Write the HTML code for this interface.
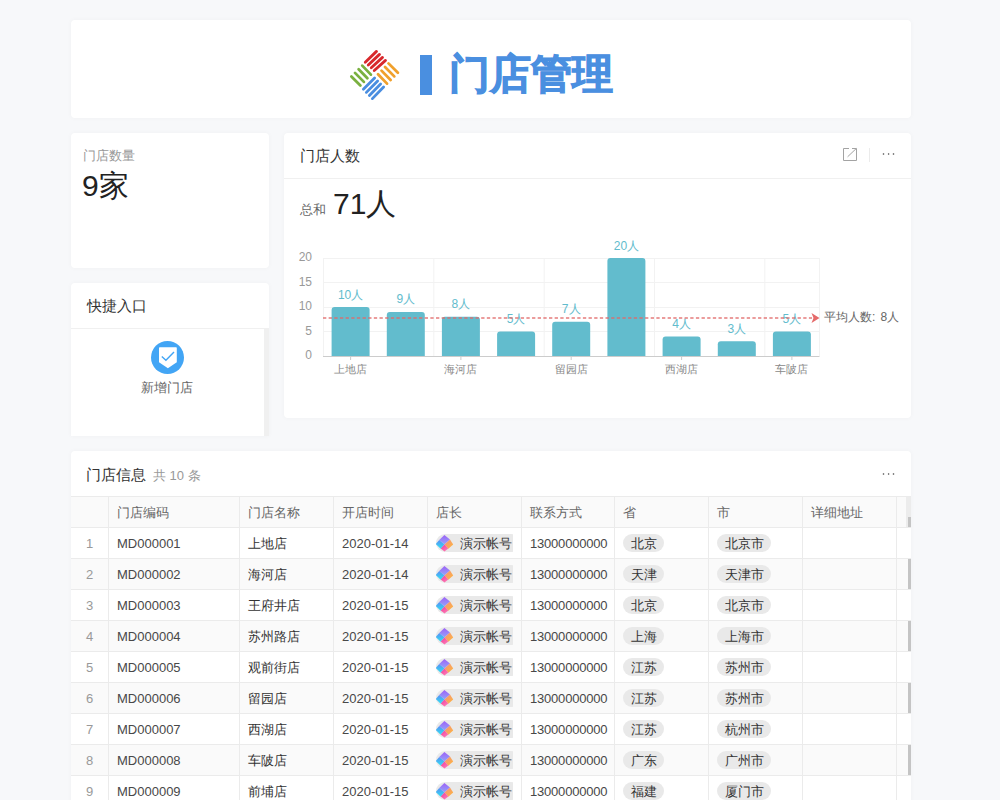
<!DOCTYPE html>
<html><head><meta charset="utf-8"><style>
*{box-sizing:border-box;margin:0;padding:0}
html,body{width:1000px;height:800px;overflow:hidden;background:#f7f8fa;font-family:"Liberation Sans",sans-serif;color:#333}
.card{position:absolute;background:#fff;border-radius:4px;box-shadow:0 0 5px rgba(0,0,0,0.035)}
.abs{position:absolute;white-space:nowrap}
.logo{position:absolute;left:345px;top:45px}
.bar{position:absolute;left:420px;top:55px;width:12px;height:40px;background:#4a8fe0}
.title{position:absolute;left:449px;top:47px;font-size:41px;font-weight:bold;-webkit-text-stroke:1.1px #4a8fe0;color:#4a8fe0;line-height:54px}
.chart{position:absolute;left:0;top:0}
.chart text{font-family:"Liberation Sans",sans-serif}
.bl{font-size:12px;fill:#62bccd}
.xl{font-size:11px;fill:#888}
.yl{font-size:12px;fill:#999}
.al{font-size:12px;fill:#666}
.tbl{position:absolute;left:71px;top:496px;width:840px;height:320px;overflow:hidden}
.tr{position:absolute;left:0;width:840px;height:31px;border-bottom:1px solid #ebebeb;background:#fff}
.tr.th{background:#fafafa;border-top:1px solid #ebebeb;height:32px}
.tr.odd{background:#fafafa}
.c{position:absolute;top:0;height:30px;line-height:30px;padding-top:1px;padding-left:8px;font-size:13px;color:#333;border-right:1px solid #ebebeb;overflow:hidden;white-space:nowrap}
.c.last{border-right:none}
.th .c{color:#666;height:30px;line-height:30px;padding-top:1px}
.c.num{text-align:center;padding-left:0;color:#999}
.c.lat{color:#484848}
.c.ph{letter-spacing:-0.2px}
.clip{width:77px;overflow:hidden;height:30px}
.chip{display:inline-block;height:18px;line-height:20px;border-radius:9px;background:#e9e9e9;padding:0 7.5px;vertical-align:middle;margin-top:-3px}
.chip.av{padding:0 8px 0 0}
.chip.av svg{vertical-align:top;margin-left:-1px;margin-right:6px}
.sb{position:absolute;left:837px;top:0;width:3px;height:30px;background:#c4c4c4}
.sbh{left:835px;width:5px;height:30px;background:#ececec}
.sbh2{left:837px;top:20px;width:3px;height:10px;background:#c4c4c4}
</style></head><body>
<div class="card" style="left:71px;top:20px;width:840px;height:98px"></div>
<svg class="logo" width="60" height="60" viewBox="0 0 60 60" stroke-width="2.8" stroke-linecap="round"><line x1="20.26" y1="17.25" x2="31.51" y2="6.38" stroke="#d8282c"/><line x1="23.26" y1="20.01" x2="34.51" y2="9.38" stroke="#d8282c"/><line x1="26.26" y1="22.76" x2="37.51" y2="12.38" stroke="#d8282c"/><line x1="29.26" y1="25.51" x2="40.51" y2="15.38" stroke="#d8282c"/><line x1="43.51" y1="18.38" x2="52.89" y2="27.76" stroke="#f0a02c"/><line x1="40.01" y1="22.01" x2="49.26" y2="31.38" stroke="#f0a02c"/><line x1="36.51" y1="25.63" x2="45.64" y2="35.01" stroke="#f0a02c"/><line x1="33.01" y1="29.26" x2="42.01" y2="38.63" stroke="#f0a02c"/><line x1="18.38" y1="44.26" x2="29.63" y2="33.01" stroke="#4a8ee0"/><line x1="21.38" y1="47.39" x2="32.63" y2="36.01" stroke="#4a8ee0"/><line x1="24.38" y1="50.51" x2="35.63" y2="39.01" stroke="#4a8ee0"/><line x1="27.38" y1="53.64" x2="38.63" y2="42.01" stroke="#4a8ee0"/><line x1="6.38" y1="31.51" x2="15.38" y2="40.51" stroke="#7ab040"/><line x1="10.00" y1="27.88" x2="18.88" y2="36.88" stroke="#7ab040"/><line x1="13.63" y1="24.26" x2="22.38" y2="33.26" stroke="#7ab040"/><line x1="17.25" y1="20.63" x2="25.88" y2="29.63" stroke="#7ab040"/></svg>
<div class="bar"></div>
<div class="title abs">门店管理</div>

<div class="card" style="left:71px;top:133px;width:198px;height:135px"></div>
<div class="abs" style="left:83px;top:147px;font-size:13px;color:#999">门店数量</div>
<div class="abs" style="left:82px;top:166px;font-size:30px;color:#222">9家</div>

<div class="card" style="left:71px;top:283px;width:198px;height:153px;border-radius:4px 4px 0 0"></div>
<div class="abs" style="left:71px;top:328px;width:198px;height:1px;background:#f0f0f0"></div>
<div class="abs" style="left:264px;top:329px;width:5px;height:107px;background:#f0f0f0"></div>
<div class="abs" style="left:87px;top:297px;font-size:15px;color:#333">快捷入口</div>
<svg class="abs" style="left:151px;top:341px" width="33" height="33" viewBox="0 0 33 33"><circle cx="16.5" cy="16.5" r="16.5" fill="#42a5f5"/><path d="M8 7 Q8 6.2 8.8 6.2 H25 Q25.8 6.2 25.8 7 V21.2 L16.9 27.3 L8 21.2Z" fill="#fff"/><path d="M10.8 15.5 L14.9 19.2 L23 11" fill="none" stroke="#42a5f5" stroke-width="1.4"/></svg>
<div class="abs" style="left:141px;top:379px;font-size:13px;color:#666">新增门店</div>

<div class="card" style="left:284px;top:133px;width:627px;height:285px"></div>
<div class="abs" style="left:284px;top:178px;width:627px;height:1px;background:#f0f0f0"></div>
<div class="abs" style="left:300px;top:147px;font-size:15px;color:#333">门店人数</div>
<svg class="abs" style="left:842px;top:147px" width="16" height="16" viewBox="0 0 16 16"><path d="M7 1.5 H1.5 V13.5 H14.5 V1.5 H10" fill="none" stroke="#a3a3a3" stroke-width="1"/><path d="M5.6 9.8 L14.2 1.6" stroke="#a3a3a3" stroke-width="1"/></svg>
<div class="abs" style="left:869px;top:148px;width:1px;height:14px;background:#ebebeb"></div>
<svg class="abs" style="left:882px;top:152px" width="14" height="4" viewBox="0 0 14 4"><circle cx="1.5" cy="2" r="0.8" fill="#444"/><circle cx="6.6" cy="2" r="0.8" fill="#444"/><circle cx="11.5" cy="2" r="0.8" fill="#444"/></svg>
<div class="abs" style="left:300px;top:201px;font-size:13px;color:#666">总和</div>
<div class="abs" style="left:333px;top:184px;font-size:30px;color:#222">71人</div>
<svg class="chart" width="1000" height="800"><line x1="323" y1="331.5" x2="819.5" y2="331.5" stroke="#f2f2f2" stroke-width="1"/><line x1="323" y1="307.5" x2="819.5" y2="307.5" stroke="#f2f2f2" stroke-width="1"/><line x1="323" y1="282.5" x2="819.5" y2="282.5" stroke="#f2f2f2" stroke-width="1"/><line x1="323" y1="258.5" x2="819.5" y2="258.5" stroke="#f2f2f2" stroke-width="1"/><line x1="323.5" y1="258" x2="323.5" y2="356" stroke="#f2f2f2" stroke-width="1"/><line x1="433.8" y1="258" x2="433.8" y2="356" stroke="#f2f2f2" stroke-width="1"/><line x1="544.2" y1="258" x2="544.2" y2="356" stroke="#f2f2f2" stroke-width="1"/><line x1="654.5" y1="258" x2="654.5" y2="356" stroke="#f2f2f2" stroke-width="1"/><line x1="764.8" y1="258" x2="764.8" y2="356" stroke="#f2f2f2" stroke-width="1"/><line x1="819.5" y1="258" x2="819.5" y2="356" stroke="#f2f2f2" stroke-width="1"/><path d="M331.6 356 V310.0 Q331.6 307.0 334.6 307.0 H366.6 Q369.6 307.0 369.6 310.0 V356Z" fill="#62bccd"/><text x="350.6" y="298.5" text-anchor="middle" class="bl">10人</text><path d="M386.8 356 V314.9 Q386.8 311.9 389.8 311.9 H421.8 Q424.8 311.9 424.8 314.9 V356Z" fill="#62bccd"/><text x="405.8" y="303.4" text-anchor="middle" class="bl">9人</text><path d="M441.9 356 V319.8 Q441.9 316.8 444.9 316.8 H476.9 Q479.9 316.8 479.9 319.8 V356Z" fill="#62bccd"/><text x="460.9" y="308.3" text-anchor="middle" class="bl">8人</text><path d="M497.1 356 V334.5 Q497.1 331.5 500.1 331.5 H532.1 Q535.1 331.5 535.1 334.5 V356Z" fill="#62bccd"/><text x="516.1" y="323.0" text-anchor="middle" class="bl">5人</text><path d="M552.2 356 V324.7 Q552.2 321.7 555.2 321.7 H587.2 Q590.2 321.7 590.2 324.7 V356Z" fill="#62bccd"/><text x="571.2" y="313.2" text-anchor="middle" class="bl">7人</text><path d="M607.4 356 V261.0 Q607.4 258.0 610.4 258.0 H642.4 Q645.4 258.0 645.4 261.0 V356Z" fill="#62bccd"/><text x="626.4" y="249.5" text-anchor="middle" class="bl">20人</text><path d="M662.6 356 V339.4 Q662.6 336.4 665.6 336.4 H697.6 Q700.6 336.4 700.6 339.4 V356Z" fill="#62bccd"/><text x="681.6" y="327.9" text-anchor="middle" class="bl">4人</text><path d="M717.8 356 V344.3 Q717.8 341.3 720.8 341.3 H752.8 Q755.8 341.3 755.8 344.3 V356Z" fill="#62bccd"/><text x="736.8" y="332.8" text-anchor="middle" class="bl">3人</text><path d="M772.9 356 V334.5 Q772.9 331.5 775.9 331.5 H807.9 Q810.9 331.5 810.9 334.5 V356Z" fill="#62bccd"/><text x="791.9" y="323.0" text-anchor="middle" class="bl">5人</text><line x1="323" y1="356.5" x2="819.5" y2="356.5" stroke="#cccccc" stroke-width="1"/><line x1="350.6" y1="356" x2="350.6" y2="360" stroke="#cccccc" stroke-width="1"/><line x1="460.9" y1="356" x2="460.9" y2="360" stroke="#cccccc" stroke-width="1"/><line x1="571.2" y1="356" x2="571.2" y2="360" stroke="#cccccc" stroke-width="1"/><line x1="681.6" y1="356" x2="681.6" y2="360" stroke="#cccccc" stroke-width="1"/><line x1="791.9" y1="356" x2="791.9" y2="360" stroke="#cccccc" stroke-width="1"/><text x="350.6" y="373" text-anchor="middle" class="xl">上地店</text><text x="460.9" y="373" text-anchor="middle" class="xl">海河店</text><text x="571.2" y="373" text-anchor="middle" class="xl">留园店</text><text x="681.6" y="373" text-anchor="middle" class="xl">西湖店</text><text x="791.9" y="373" text-anchor="middle" class="xl">车陂店</text><text x="312" y="359.0" text-anchor="end" class="yl">0</text><text x="312" y="334.5" text-anchor="end" class="yl">5</text><text x="312" y="310.0" text-anchor="end" class="yl">10</text><text x="312" y="285.5" text-anchor="end" class="yl">15</text><text x="312" y="261.0" text-anchor="end" class="yl">20</text><line x1="323" y1="318" x2="812" y2="318" stroke="#e06868" stroke-opacity="0.66" stroke-width="1.8" stroke-dasharray="3.3 2.35"/><path d="M811.5 313.0 L819.5 318.0 L811.5 323.0 L813.5 318.0Z" fill="#e56a6a"/><text x="824" y="321.0" class="al">平均人数:<tspan x="880.5">8人</tspan></text></svg>

<div class="card" style="left:71px;top:451px;width:840px;height:400px"></div>
<div class="abs" style="left:86px;top:466px;font-size:15px;color:#333">门店信息</div>
<div class="abs" style="left:153px;top:467px;font-size:13px;color:#999">共 10 条</div>
<svg class="abs" style="left:882px;top:472px" width="14" height="4" viewBox="0 0 14 4"><circle cx="1.5" cy="2" r="0.8" fill="#444"/><circle cx="6.6" cy="2" r="0.8" fill="#444"/><circle cx="11.5" cy="2" r="0.8" fill="#444"/></svg>
<div class="tbl">
<div class="tr th" style="top:0px"><div class="c " style="left:0px;width:38px"></div><div class="c " style="left:38px;width:131px">门店编码</div><div class="c " style="left:169px;width:94px">门店名称</div><div class="c " style="left:263px;width:94px">开店时间</div><div class="c " style="left:357px;width:94px">店长</div><div class="c " style="left:451px;width:93px">联系方式</div><div class="c " style="left:544px;width:94px">省</div><div class="c " style="left:638px;width:94px">市</div><div class="c " style="left:732px;width:94px">详细地址</div><div class="c  last" style="left:826px;width:15px"></div><div class="sb sbh"></div><div class="sb sbh2"></div></div>
<div class="tr" style="top:32px"><div class="c num" style="left:0px;width:38px">1</div><div class="c lat" style="left:38px;width:131px">MD000001</div><div class="c " style="left:169px;width:94px">上地店</div><div class="c lat" style="left:263px;width:94px">2020-01-14</div><div class="c avc" style="left:357px;width:94px"><div class="clip"><span class="chip av"><svg width="19" height="18" viewBox="0 0 19 18"><defs><linearGradient id="gp" x1="0" y1="0" x2="0" y2="1"><stop offset="0" stop-color="#9d62f6"/><stop offset="1" stop-color="#94a4fa"/></linearGradient><linearGradient id="gb" x1="0" y1="0" x2="0" y2="1"><stop offset="0" stop-color="#5a8cf6"/><stop offset="1" stop-color="#2ee4f2"/></linearGradient><linearGradient id="go" x1="0" y1="0" x2="1" y2="1"><stop offset="0" stop-color="#f39080"/><stop offset="1" stop-color="#ffb83a"/></linearGradient><linearGradient id="gk" x1="0" y1="0" x2="1" y2="1"><stop offset="0" stop-color="#f03c9c"/><stop offset="1" stop-color="#ff86b8"/></linearGradient></defs><path d="M9.4 1 L15 5.6 L9.5 10.6 L4.2 6Z" fill="url(#gp)"/><path d="M4.2 6 L9.5 10.6 L5.7 14.7 L0.8 10.1Z" fill="url(#gb)"/><path d="M15 5.6 L18.2 10.4 L13.3 14.8 L9.5 10.6Z" fill="url(#go)"/><path d="M9.5 10.6 L13.3 14.6 L9.5 17.6 L5.7 14.6Z" fill="url(#gk)"/></svg>演示帐号</span></div></div><div class="c lat ph" style="left:451px;width:93px">13000000000</div><div class="c " style="left:544px;width:94px"><span class="chip">北京</span></div><div class="c " style="left:638px;width:94px"><span class="chip">北京市</span></div><div class="c " style="left:732px;width:94px"></div><div class="c  last" style="left:826px;width:15px"></div></div>
<div class="tr odd" style="top:63px"><div class="c num" style="left:0px;width:38px">2</div><div class="c lat" style="left:38px;width:131px">MD000002</div><div class="c " style="left:169px;width:94px">海河店</div><div class="c lat" style="left:263px;width:94px">2020-01-14</div><div class="c avc" style="left:357px;width:94px"><div class="clip"><span class="chip av"><svg width="19" height="18" viewBox="0 0 19 18"><defs><linearGradient id="gp" x1="0" y1="0" x2="0" y2="1"><stop offset="0" stop-color="#9d62f6"/><stop offset="1" stop-color="#94a4fa"/></linearGradient><linearGradient id="gb" x1="0" y1="0" x2="0" y2="1"><stop offset="0" stop-color="#5a8cf6"/><stop offset="1" stop-color="#2ee4f2"/></linearGradient><linearGradient id="go" x1="0" y1="0" x2="1" y2="1"><stop offset="0" stop-color="#f39080"/><stop offset="1" stop-color="#ffb83a"/></linearGradient><linearGradient id="gk" x1="0" y1="0" x2="1" y2="1"><stop offset="0" stop-color="#f03c9c"/><stop offset="1" stop-color="#ff86b8"/></linearGradient></defs><path d="M9.4 1 L15 5.6 L9.5 10.6 L4.2 6Z" fill="url(#gp)"/><path d="M4.2 6 L9.5 10.6 L5.7 14.7 L0.8 10.1Z" fill="url(#gb)"/><path d="M15 5.6 L18.2 10.4 L13.3 14.8 L9.5 10.6Z" fill="url(#go)"/><path d="M9.5 10.6 L13.3 14.6 L9.5 17.6 L5.7 14.6Z" fill="url(#gk)"/></svg>演示帐号</span></div></div><div class="c lat ph" style="left:451px;width:93px">13000000000</div><div class="c " style="left:544px;width:94px"><span class="chip">天津</span></div><div class="c " style="left:638px;width:94px"><span class="chip">天津市</span></div><div class="c " style="left:732px;width:94px"></div><div class="c  last" style="left:826px;width:15px"></div><div class="sb"></div></div>
<div class="tr" style="top:94px"><div class="c num" style="left:0px;width:38px">3</div><div class="c lat" style="left:38px;width:131px">MD000003</div><div class="c " style="left:169px;width:94px">王府井店</div><div class="c lat" style="left:263px;width:94px">2020-01-15</div><div class="c avc" style="left:357px;width:94px"><div class="clip"><span class="chip av"><svg width="19" height="18" viewBox="0 0 19 18"><defs><linearGradient id="gp" x1="0" y1="0" x2="0" y2="1"><stop offset="0" stop-color="#9d62f6"/><stop offset="1" stop-color="#94a4fa"/></linearGradient><linearGradient id="gb" x1="0" y1="0" x2="0" y2="1"><stop offset="0" stop-color="#5a8cf6"/><stop offset="1" stop-color="#2ee4f2"/></linearGradient><linearGradient id="go" x1="0" y1="0" x2="1" y2="1"><stop offset="0" stop-color="#f39080"/><stop offset="1" stop-color="#ffb83a"/></linearGradient><linearGradient id="gk" x1="0" y1="0" x2="1" y2="1"><stop offset="0" stop-color="#f03c9c"/><stop offset="1" stop-color="#ff86b8"/></linearGradient></defs><path d="M9.4 1 L15 5.6 L9.5 10.6 L4.2 6Z" fill="url(#gp)"/><path d="M4.2 6 L9.5 10.6 L5.7 14.7 L0.8 10.1Z" fill="url(#gb)"/><path d="M15 5.6 L18.2 10.4 L13.3 14.8 L9.5 10.6Z" fill="url(#go)"/><path d="M9.5 10.6 L13.3 14.6 L9.5 17.6 L5.7 14.6Z" fill="url(#gk)"/></svg>演示帐号</span></div></div><div class="c lat ph" style="left:451px;width:93px">13000000000</div><div class="c " style="left:544px;width:94px"><span class="chip">北京</span></div><div class="c " style="left:638px;width:94px"><span class="chip">北京市</span></div><div class="c " style="left:732px;width:94px"></div><div class="c  last" style="left:826px;width:15px"></div></div>
<div class="tr odd" style="top:125px"><div class="c num" style="left:0px;width:38px">4</div><div class="c lat" style="left:38px;width:131px">MD000004</div><div class="c " style="left:169px;width:94px">苏州路店</div><div class="c lat" style="left:263px;width:94px">2020-01-15</div><div class="c avc" style="left:357px;width:94px"><div class="clip"><span class="chip av"><svg width="19" height="18" viewBox="0 0 19 18"><defs><linearGradient id="gp" x1="0" y1="0" x2="0" y2="1"><stop offset="0" stop-color="#9d62f6"/><stop offset="1" stop-color="#94a4fa"/></linearGradient><linearGradient id="gb" x1="0" y1="0" x2="0" y2="1"><stop offset="0" stop-color="#5a8cf6"/><stop offset="1" stop-color="#2ee4f2"/></linearGradient><linearGradient id="go" x1="0" y1="0" x2="1" y2="1"><stop offset="0" stop-color="#f39080"/><stop offset="1" stop-color="#ffb83a"/></linearGradient><linearGradient id="gk" x1="0" y1="0" x2="1" y2="1"><stop offset="0" stop-color="#f03c9c"/><stop offset="1" stop-color="#ff86b8"/></linearGradient></defs><path d="M9.4 1 L15 5.6 L9.5 10.6 L4.2 6Z" fill="url(#gp)"/><path d="M4.2 6 L9.5 10.6 L5.7 14.7 L0.8 10.1Z" fill="url(#gb)"/><path d="M15 5.6 L18.2 10.4 L13.3 14.8 L9.5 10.6Z" fill="url(#go)"/><path d="M9.5 10.6 L13.3 14.6 L9.5 17.6 L5.7 14.6Z" fill="url(#gk)"/></svg>演示帐号</span></div></div><div class="c lat ph" style="left:451px;width:93px">13000000000</div><div class="c " style="left:544px;width:94px"><span class="chip">上海</span></div><div class="c " style="left:638px;width:94px"><span class="chip">上海市</span></div><div class="c " style="left:732px;width:94px"></div><div class="c  last" style="left:826px;width:15px"></div><div class="sb"></div></div>
<div class="tr" style="top:156px"><div class="c num" style="left:0px;width:38px">5</div><div class="c lat" style="left:38px;width:131px">MD000005</div><div class="c " style="left:169px;width:94px">观前街店</div><div class="c lat" style="left:263px;width:94px">2020-01-15</div><div class="c avc" style="left:357px;width:94px"><div class="clip"><span class="chip av"><svg width="19" height="18" viewBox="0 0 19 18"><defs><linearGradient id="gp" x1="0" y1="0" x2="0" y2="1"><stop offset="0" stop-color="#9d62f6"/><stop offset="1" stop-color="#94a4fa"/></linearGradient><linearGradient id="gb" x1="0" y1="0" x2="0" y2="1"><stop offset="0" stop-color="#5a8cf6"/><stop offset="1" stop-color="#2ee4f2"/></linearGradient><linearGradient id="go" x1="0" y1="0" x2="1" y2="1"><stop offset="0" stop-color="#f39080"/><stop offset="1" stop-color="#ffb83a"/></linearGradient><linearGradient id="gk" x1="0" y1="0" x2="1" y2="1"><stop offset="0" stop-color="#f03c9c"/><stop offset="1" stop-color="#ff86b8"/></linearGradient></defs><path d="M9.4 1 L15 5.6 L9.5 10.6 L4.2 6Z" fill="url(#gp)"/><path d="M4.2 6 L9.5 10.6 L5.7 14.7 L0.8 10.1Z" fill="url(#gb)"/><path d="M15 5.6 L18.2 10.4 L13.3 14.8 L9.5 10.6Z" fill="url(#go)"/><path d="M9.5 10.6 L13.3 14.6 L9.5 17.6 L5.7 14.6Z" fill="url(#gk)"/></svg>演示帐号</span></div></div><div class="c lat ph" style="left:451px;width:93px">13000000000</div><div class="c " style="left:544px;width:94px"><span class="chip">江苏</span></div><div class="c " style="left:638px;width:94px"><span class="chip">苏州市</span></div><div class="c " style="left:732px;width:94px"></div><div class="c  last" style="left:826px;width:15px"></div></div>
<div class="tr odd" style="top:187px"><div class="c num" style="left:0px;width:38px">6</div><div class="c lat" style="left:38px;width:131px">MD000006</div><div class="c " style="left:169px;width:94px">留园店</div><div class="c lat" style="left:263px;width:94px">2020-01-15</div><div class="c avc" style="left:357px;width:94px"><div class="clip"><span class="chip av"><svg width="19" height="18" viewBox="0 0 19 18"><defs><linearGradient id="gp" x1="0" y1="0" x2="0" y2="1"><stop offset="0" stop-color="#9d62f6"/><stop offset="1" stop-color="#94a4fa"/></linearGradient><linearGradient id="gb" x1="0" y1="0" x2="0" y2="1"><stop offset="0" stop-color="#5a8cf6"/><stop offset="1" stop-color="#2ee4f2"/></linearGradient><linearGradient id="go" x1="0" y1="0" x2="1" y2="1"><stop offset="0" stop-color="#f39080"/><stop offset="1" stop-color="#ffb83a"/></linearGradient><linearGradient id="gk" x1="0" y1="0" x2="1" y2="1"><stop offset="0" stop-color="#f03c9c"/><stop offset="1" stop-color="#ff86b8"/></linearGradient></defs><path d="M9.4 1 L15 5.6 L9.5 10.6 L4.2 6Z" fill="url(#gp)"/><path d="M4.2 6 L9.5 10.6 L5.7 14.7 L0.8 10.1Z" fill="url(#gb)"/><path d="M15 5.6 L18.2 10.4 L13.3 14.8 L9.5 10.6Z" fill="url(#go)"/><path d="M9.5 10.6 L13.3 14.6 L9.5 17.6 L5.7 14.6Z" fill="url(#gk)"/></svg>演示帐号</span></div></div><div class="c lat ph" style="left:451px;width:93px">13000000000</div><div class="c " style="left:544px;width:94px"><span class="chip">江苏</span></div><div class="c " style="left:638px;width:94px"><span class="chip">苏州市</span></div><div class="c " style="left:732px;width:94px"></div><div class="c  last" style="left:826px;width:15px"></div><div class="sb"></div></div>
<div class="tr" style="top:218px"><div class="c num" style="left:0px;width:38px">7</div><div class="c lat" style="left:38px;width:131px">MD000007</div><div class="c " style="left:169px;width:94px">西湖店</div><div class="c lat" style="left:263px;width:94px">2020-01-15</div><div class="c avc" style="left:357px;width:94px"><div class="clip"><span class="chip av"><svg width="19" height="18" viewBox="0 0 19 18"><defs><linearGradient id="gp" x1="0" y1="0" x2="0" y2="1"><stop offset="0" stop-color="#9d62f6"/><stop offset="1" stop-color="#94a4fa"/></linearGradient><linearGradient id="gb" x1="0" y1="0" x2="0" y2="1"><stop offset="0" stop-color="#5a8cf6"/><stop offset="1" stop-color="#2ee4f2"/></linearGradient><linearGradient id="go" x1="0" y1="0" x2="1" y2="1"><stop offset="0" stop-color="#f39080"/><stop offset="1" stop-color="#ffb83a"/></linearGradient><linearGradient id="gk" x1="0" y1="0" x2="1" y2="1"><stop offset="0" stop-color="#f03c9c"/><stop offset="1" stop-color="#ff86b8"/></linearGradient></defs><path d="M9.4 1 L15 5.6 L9.5 10.6 L4.2 6Z" fill="url(#gp)"/><path d="M4.2 6 L9.5 10.6 L5.7 14.7 L0.8 10.1Z" fill="url(#gb)"/><path d="M15 5.6 L18.2 10.4 L13.3 14.8 L9.5 10.6Z" fill="url(#go)"/><path d="M9.5 10.6 L13.3 14.6 L9.5 17.6 L5.7 14.6Z" fill="url(#gk)"/></svg>演示帐号</span></div></div><div class="c lat ph" style="left:451px;width:93px">13000000000</div><div class="c " style="left:544px;width:94px"><span class="chip">江苏</span></div><div class="c " style="left:638px;width:94px"><span class="chip">杭州市</span></div><div class="c " style="left:732px;width:94px"></div><div class="c  last" style="left:826px;width:15px"></div></div>
<div class="tr odd" style="top:249px"><div class="c num" style="left:0px;width:38px">8</div><div class="c lat" style="left:38px;width:131px">MD000008</div><div class="c " style="left:169px;width:94px">车陂店</div><div class="c lat" style="left:263px;width:94px">2020-01-15</div><div class="c avc" style="left:357px;width:94px"><div class="clip"><span class="chip av"><svg width="19" height="18" viewBox="0 0 19 18"><defs><linearGradient id="gp" x1="0" y1="0" x2="0" y2="1"><stop offset="0" stop-color="#9d62f6"/><stop offset="1" stop-color="#94a4fa"/></linearGradient><linearGradient id="gb" x1="0" y1="0" x2="0" y2="1"><stop offset="0" stop-color="#5a8cf6"/><stop offset="1" stop-color="#2ee4f2"/></linearGradient><linearGradient id="go" x1="0" y1="0" x2="1" y2="1"><stop offset="0" stop-color="#f39080"/><stop offset="1" stop-color="#ffb83a"/></linearGradient><linearGradient id="gk" x1="0" y1="0" x2="1" y2="1"><stop offset="0" stop-color="#f03c9c"/><stop offset="1" stop-color="#ff86b8"/></linearGradient></defs><path d="M9.4 1 L15 5.6 L9.5 10.6 L4.2 6Z" fill="url(#gp)"/><path d="M4.2 6 L9.5 10.6 L5.7 14.7 L0.8 10.1Z" fill="url(#gb)"/><path d="M15 5.6 L18.2 10.4 L13.3 14.8 L9.5 10.6Z" fill="url(#go)"/><path d="M9.5 10.6 L13.3 14.6 L9.5 17.6 L5.7 14.6Z" fill="url(#gk)"/></svg>演示帐号</span></div></div><div class="c lat ph" style="left:451px;width:93px">13000000000</div><div class="c " style="left:544px;width:94px"><span class="chip">广东</span></div><div class="c " style="left:638px;width:94px"><span class="chip">广州市</span></div><div class="c " style="left:732px;width:94px"></div><div class="c  last" style="left:826px;width:15px"></div><div class="sb"></div></div>
<div class="tr" style="top:280px"><div class="c num" style="left:0px;width:38px">9</div><div class="c lat" style="left:38px;width:131px">MD000009</div><div class="c " style="left:169px;width:94px">前埔店</div><div class="c lat" style="left:263px;width:94px">2020-01-15</div><div class="c avc" style="left:357px;width:94px"><div class="clip"><span class="chip av"><svg width="19" height="18" viewBox="0 0 19 18"><defs><linearGradient id="gp" x1="0" y1="0" x2="0" y2="1"><stop offset="0" stop-color="#9d62f6"/><stop offset="1" stop-color="#94a4fa"/></linearGradient><linearGradient id="gb" x1="0" y1="0" x2="0" y2="1"><stop offset="0" stop-color="#5a8cf6"/><stop offset="1" stop-color="#2ee4f2"/></linearGradient><linearGradient id="go" x1="0" y1="0" x2="1" y2="1"><stop offset="0" stop-color="#f39080"/><stop offset="1" stop-color="#ffb83a"/></linearGradient><linearGradient id="gk" x1="0" y1="0" x2="1" y2="1"><stop offset="0" stop-color="#f03c9c"/><stop offset="1" stop-color="#ff86b8"/></linearGradient></defs><path d="M9.4 1 L15 5.6 L9.5 10.6 L4.2 6Z" fill="url(#gp)"/><path d="M4.2 6 L9.5 10.6 L5.7 14.7 L0.8 10.1Z" fill="url(#gb)"/><path d="M15 5.6 L18.2 10.4 L13.3 14.8 L9.5 10.6Z" fill="url(#go)"/><path d="M9.5 10.6 L13.3 14.6 L9.5 17.6 L5.7 14.6Z" fill="url(#gk)"/></svg>演示帐号</span></div></div><div class="c lat ph" style="left:451px;width:93px">13000000000</div><div class="c " style="left:544px;width:94px"><span class="chip">福建</span></div><div class="c " style="left:638px;width:94px"><span class="chip">厦门市</span></div><div class="c " style="left:732px;width:94px"></div><div class="c  last" style="left:826px;width:15px"></div></div>
<div class="tr odd" style="top:311px"><div class="c num" style="left:0px;width:38px">10</div><div class="c lat" style="left:38px;width:131px">MD000010</div><div class="c " style="left:169px;width:94px">XX店</div><div class="c lat" style="left:263px;width:94px">2020-01-15</div><div class="c avc" style="left:357px;width:94px"><div class="clip"><span class="chip av"><svg width="19" height="18" viewBox="0 0 19 18"><defs><linearGradient id="gp" x1="0" y1="0" x2="0" y2="1"><stop offset="0" stop-color="#9d62f6"/><stop offset="1" stop-color="#94a4fa"/></linearGradient><linearGradient id="gb" x1="0" y1="0" x2="0" y2="1"><stop offset="0" stop-color="#5a8cf6"/><stop offset="1" stop-color="#2ee4f2"/></linearGradient><linearGradient id="go" x1="0" y1="0" x2="1" y2="1"><stop offset="0" stop-color="#f39080"/><stop offset="1" stop-color="#ffb83a"/></linearGradient><linearGradient id="gk" x1="0" y1="0" x2="1" y2="1"><stop offset="0" stop-color="#f03c9c"/><stop offset="1" stop-color="#ff86b8"/></linearGradient></defs><path d="M9.4 1 L15 5.6 L9.5 10.6 L4.2 6Z" fill="url(#gp)"/><path d="M4.2 6 L9.5 10.6 L5.7 14.7 L0.8 10.1Z" fill="url(#gb)"/><path d="M15 5.6 L18.2 10.4 L13.3 14.8 L9.5 10.6Z" fill="url(#go)"/><path d="M9.5 10.6 L13.3 14.6 L9.5 17.6 L5.7 14.6Z" fill="url(#gk)"/></svg>演示帐号</span></div></div><div class="c lat ph" style="left:451px;width:93px">13000000000</div><div class="c " style="left:544px;width:94px"><span class="chip">福建</span></div><div class="c " style="left:638px;width:94px"><span class="chip">厦门市</span></div><div class="c " style="left:732px;width:94px"></div><div class="c  last" style="left:826px;width:15px"></div><div class="sb"></div></div>
</div>
</body></html>
